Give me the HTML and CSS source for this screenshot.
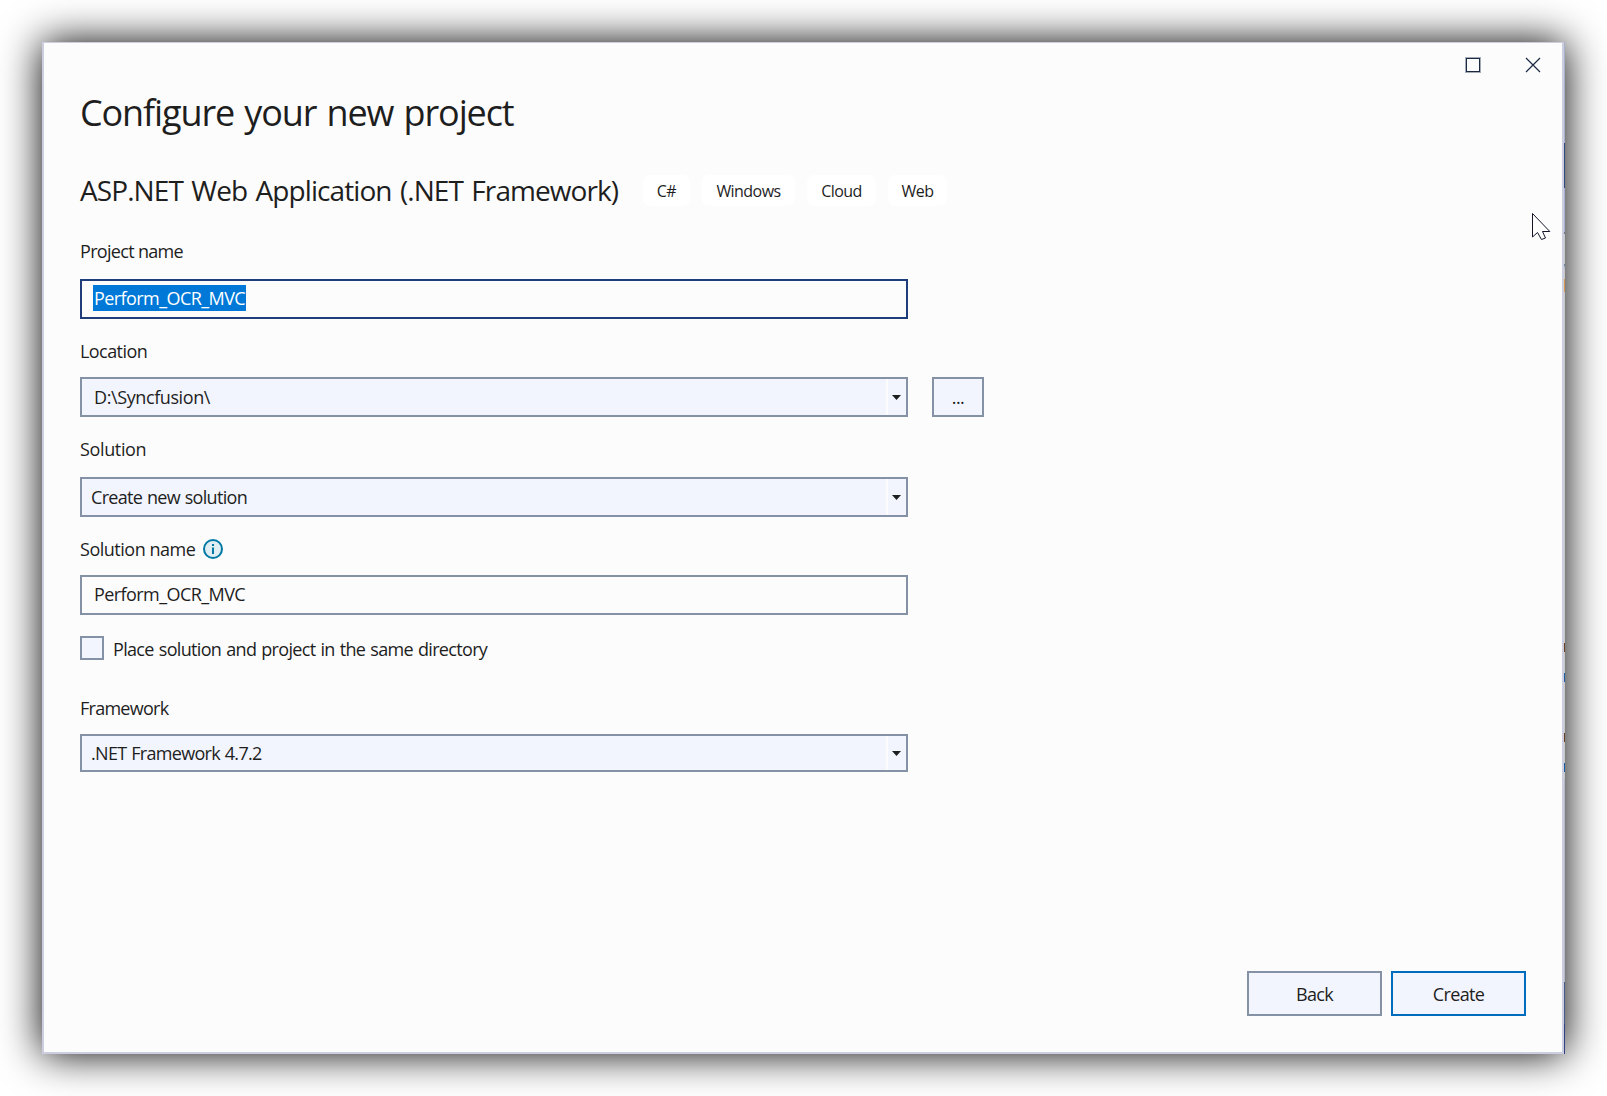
FILE: index.html
```html
<!DOCTYPE html>
<html lang="en">
<head>
<meta charset="utf-8">
<title>Configure your new project</title>
<link rel="stylesheet" href="styles.css">
</head>
<body>
<main class="window">
  <header class="titlebar">
    <svg class="win-icon" width="16" height="16" viewBox="0 0 16 16"><rect x=".5" y=".5" width="15" height="15" fill="#fcfcfc" stroke="#a3abb4"/><rect x="1.5" y="1.5" width="13" height="13" fill="#fcfcfc" stroke="#1b2a42"/></svg>
    <svg class="win-icon" width="16" height="16" viewBox="0 0 16 16"><path d="M1 1L15 15M15 1L1 15" stroke="#1b2a42" stroke-width="1.2"/></svg>
  </header>
  <h1 class="title">Configure your new project</h1>
  <div class="template">
    <h2 class="template-name">ASP.NET Web Application (.NET Framework)</h2>
    <ul class="tags">
      <li class="tag tag-cs">C#</li>
      <li class="tag tag-win">Windows</li>
      <li class="tag tag-cloud">Cloud</li>
      <li class="tag tag-web">Web</li>
    </ul>
  </div>
  <form class="form">
    <div class="label label-project">Project name</div>
    <div class="field field-focus"><span class="selected">Perform_OCR_MVC</span></div>
    <div class="label label-location">Location</div>
    <div class="row">
      <div class="field combo combo-edit"><span class="path">D:\Syncfusion\</span><i class="drop"><svg width="9" height="5" viewBox="0 0 9 5"><path d="M0 0H9L4.5 5Z" fill="#1e1e1e"/></svg></i></div>
      <div class="button browse">...</div>
    </div>
    <div class="label label-solution">Solution</div>
    <div class="field combo"><span>Create new solution</span><i class="drop"><svg width="9" height="5" viewBox="0 0 9 5"><path d="M0 0H9L4.5 5Z" fill="#1e1e1e"/></svg></i></div>
    <div class="label label-solname"><span>Solution name</span>
      <svg class="info" width="20" height="20" viewBox="0 0 20 20"><circle cx="10" cy="10" r="9" fill="#e0edf3" stroke="#0079a5" stroke-width="2"/><path d="M9 8.5h2V15H9zM9 5h2v2H9z" fill="#0079a5"/></svg>
    </div>
    <div class="field field-solname"><span>Perform_OCR_MVC</span></div>
    <div class="check"><i class="box"></i><span class="place">Place solution and project in the same directory</span></div>
    <div class="label label-framework">Framework</div>
    <div class="field combo combo-fw"><span>.NET Framework 4.7.2</span><i class="drop"><svg width="9" height="5" viewBox="0 0 9 5"><path d="M0 0H9L4.5 5Z" fill="#1e1e1e"/></svg></i></div>
  </form>
  <footer class="actions">
    <div class="button back">Back</div>
    <div class="button create">Create</div>
  </footer>
  <i class="edge"></i>
  <svg class="cursor" width="20" height="28" viewBox="0 0 20 28"><path d="M.5 .5V24L5.5 19.5L9.5 26.5L13.5 25L10.5 18.5H17.8Z" fill="#fff" stroke="#15152a"/></svg>
</main>
</body>
</html>
```
FILE: styles.css
```css
* { box-sizing: border-box; }

body {
  margin: 0;
  height: 1096px;
  overflow: hidden;
  padding: 42px;
  background: #fff;
  color: #1e1e1e;
  font: 18px/24px "Open Sans", "Noto Sans", sans-serif;
  letter-spacing: -0.57px;
}

.window {
  position: relative;
  display: flex;
  flex-direction: column;
  width: 1523px;
  height: 1012px;
  padding: 0 36px 36px 36px;
  border: solid #cccedf;
  border-width: 1px 3px 2px 2px;
  background: #fcfcfc;
  box-shadow: 0 0 39px #000;
}

.titlebar { display: flex; justify-content: flex-end; gap: 44px; height: 42px; padding: 14px 0 0; margin-right: -15px; }
.title { margin: 0; height: 56px; font-size: 36px; line-height: 56px; font-weight: 400; letter-spacing: -1.12px; word-spacing: 2px; }
.template { display: flex; height: 40px; margin-top: 29px; }
.template-name { margin: 0; width: 563px; font-size: 28px; line-height: 40px; font-weight: 400; letter-spacing: -0.92px; word-spacing: 2px; white-space: nowrap; }
.tags { display: flex; gap: 12px; margin: 5px 0 0; padding: 0; list-style: none; }
.tag { height: 31px; border-radius: 7px; background: #fff; font-size: 16px; line-height: 32px; letter-spacing: -0.55px; text-align: center; white-space: nowrap; }
.tag-cs { width: 47px; }
.tag-win { width: 93px; }
.tag-cloud { width: 69px; }
.tag-web { width: 59px; }

.form { display: flex; flex-direction: column; }
.label { display: flex; height: 24px; }
.label-project { margin-top: 29px; letter-spacing: -0.68px; }
.label-location { margin-top: 20px; }
.label-solution { margin-top: 20px; letter-spacing: -0.36px; }
.label-solname { margin-top: 20px; letter-spacing: -0.48px; }
.label-framework { margin-top: 36px; letter-spacing: -0.74px; }

.field {
  display: flex;
  align-items: center;
  width: 828px;
  height: 40px;
  margin-top: 16px;
  padding-left: 12px;
  border: 2px solid #8591a5;
  white-space: nowrap;
}
.field-focus { border-color: #1f3d7a; padding-left: 11px; padding-bottom: 2px; }
.selected { height: 26px; padding: 0 1px; background: #0078d7; color: #fff; line-height: 26px; }
.row { display: flex; gap: 24px; margin-top: 14px; }
.row .field { margin-top: 0; }
.combo { background: #f2f5fd; padding-left: 9px; letter-spacing: -0.68px; word-spacing: 0.7px; }
.combo-edit { padding-left: 12px; letter-spacing: -0.4px; }
.drop { display: flex; align-items: center; height: 100%; width: 20px; margin-left: auto; padding-left: 4px; border-left: 2px solid #fcfcfc; }
.field-solname { margin-top: 14px; padding-bottom: 2px; }
.combo-fw { height: 38px; margin-top: 14px; }
.info { margin: 2px 0 0 8px; }
.check { display: flex; height: 24px; margin-top: 21px; gap: 9px; }
.box { width: 24px; height: 24px; border: 2px solid #8591a5; background: #f2f5fd; }
.place { padding-top: 1px; letter-spacing: -0.67px; word-spacing: 1px; }

.button { display: flex; align-items: center; justify-content: center; border: 2px solid #8591a5; background: #f2f5fd; }
.browse { width: 52px; height: 40px; }
.actions { display: flex; justify-content: flex-end; gap: 9px; margin-top: auto; }
.back, .create { width: 135px; height: 45px; letter-spacing: -0.65px; }
.create { border-color: #006cbe; }

/* sliver of the window behind, showing along the right border */
.edge {
  position: absolute;
  top: -1px;
  right: -3px;
  width: 1px;
  height: 1012px;
  background: linear-gradient(
    #a9b0cc 0 101px, #2f4a80 101px 146px, #a9b2d2 146px 190px,
    #6f7885 190px 192px, #c8c8c8 192px 222px, #6f8095 222px 224px,
    #a9b6d0 224px 227px, #c8c8c8 227px 237px, #d99a50 237px 250px,
    #c8c8c8 250px 601px, #6b4020 601px 610px, #c8c8c8 610px 631px,
    #1a5fa5 631px 640px, #c8c8c8 640px 691px, #6b4020 691px 700px,
    #c8c8c8 700px 721px, #1a5fa5 721px 730px, #c8c8c8 730px 737px,
    #b4b8c8 737px 940px, #465a8c 940px 982px, #2f4180 982px);
}
.cursor { position: absolute; left: 1488px; top: 170px; }
```
